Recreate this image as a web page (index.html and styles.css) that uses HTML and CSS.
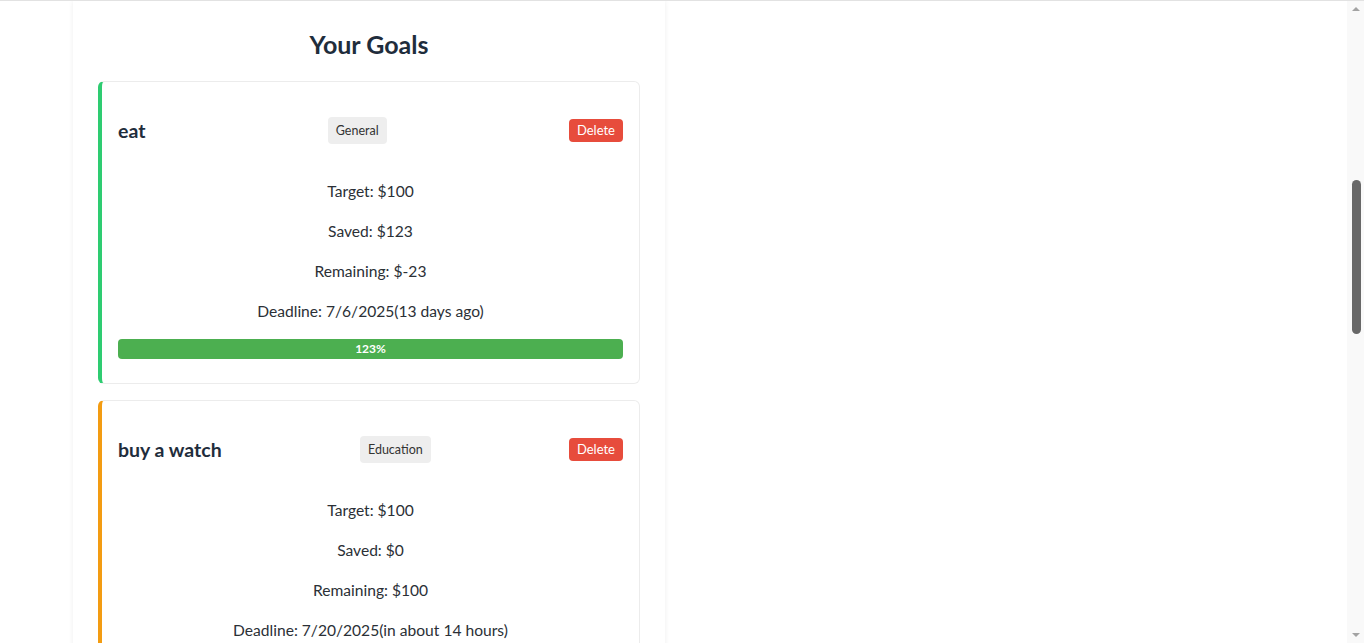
FILE: index.html
```html
<!DOCTYPE html>
<html lang="en">
<head>
<meta charset="utf-8">
<title>Your Goals</title>
<link rel="stylesheet" href="styles.css">
</head>
<body>
<div class="layout">
  <section class="panel">
    <h2 class="panel-title">Your Goals</h2>

    <div class="goal goal-done">
      <div class="goal-head">
        <h3 class="goal-name">eat</h3>
        <span class="badge">General</span>
        <button class="btn-delete">Delete</button>
      </div>
      <p class="goal-line">Target: $100</p>
      <p class="goal-line">Saved: $123</p>
      <p class="goal-line">Remaining: $-23</p>
      <p class="goal-line">Deadline: 7/6/2025(13 days ago)</p>
      <div class="bar">
        <div class="bar-fill" style="width:100%">123%</div>
      </div>
    </div>

    <div class="goal goal-pending">
      <div class="goal-head">
        <h3 class="goal-name">buy a watch</h3>
        <span class="badge">Education</span>
        <button class="btn-delete">Delete</button>
      </div>
      <p class="goal-line">Target: $100</p>
      <p class="goal-line">Saved: $0</p>
      <p class="goal-line">Remaining: $100</p>
      <p class="goal-line">Deadline: 7/20/2025(in about 14 hours)</p>
      <div class="bar">
        <div class="bar-fill" style="width:0%"></div>
        <span class="bar-label">0%</span>
      </div>
    </div>
  </section>
</div>

<div class="scrollbar" aria-hidden="true">
  <span class="scroll-arrow scroll-up"></span>
  <span class="scroll-thumb"></span>
  <span class="scroll-arrow scroll-down"></span>
</div>
</body>
</html>
```

FILE: styles.css
```css
* { box-sizing: border-box; }

html, body {
  margin: 0;
  padding: 0;
  background: #ffffff;
}

body {
  font-family: Lato, "Open Sans", sans-serif;
  color: #2b3036;
  line-height: 1.5;
  font-size: 16px;
  border-top: 1px solid #e2e2e2;
  padding-right: 18px;
}

.layout {
  width: 1200px;
  margin: 0 auto;
  display: grid;
  grid-template-columns: 1fr 1fr;
  column-gap: 16px;
  align-items: start;
}

.panel {
  background: #fff;
  padding: 25px 25px 25px;
  box-shadow: 0 0 5px rgba(0, 0, 0, 0.07);
}

.panel-title {
  margin: 0 0 19px;
  font-size: 25px;
  line-height: 36px;
  font-weight: 700;
  text-align: center;
  color: #1f2d3c;
}

.goal {
  border: 1px solid #ececec;
  border-left: 4px solid #2ecc71;
  border-radius: 6px;
  padding: 16px 16px 24px;
  margin-bottom: 16px;
  text-align: center;
}

.goal-pending { border-left-color: #f39c12; }

.goal-head {
  display: flex;
  justify-content: space-between;
  align-items: center;
  height: 65px;
}

.goal-name {
  margin: 0;
  font-size: 19.5px;
  font-weight: 700;
  color: #1f2d3c;
}

.badge {
  background: #eeeeee;
  color: #333;
  font-size: 12.5px;
  line-height: 19.5px;
  padding: 4px 8px;
  border-radius: 4px;
}

.btn-delete {
  background: #e74c3c;
  color: #fff;
  border: none;
  border-radius: 4px;
  font-family: inherit;
  font-size: 13px;
  line-height: 17px;
  padding: 3px 8px;
  cursor: pointer;
}

.goal-line {
  margin: 16px 0;
  line-height: 24px;
  font-size: 15.6px;
}

.bar {
  position: relative;
  height: 20px;
  background: #eeeeee;
  border-radius: 4px;
  overflow: hidden;
}

.bar-fill {
  height: 100%;
  background: #4caf50;
  color: #fff;
  font-size: 12px;
  font-weight: 700;
  line-height: 20px;
  text-align: center;
}

.bar-label {
  position: absolute;
  inset: 0;
  font-size: 12px;
  font-weight: 700;
  line-height: 20px;
  color: #333;
}

/* classic browser scrollbar, drawn over the right edge */
.scrollbar {
  position: fixed;
  top: 0;
  right: 0;
  width: 17px;
  height: 100vh;
  background: #f9f9f9;
  border-top: 1px solid #e2e2e2;
}

.scroll-thumb {
  position: absolute;
  left: 5px;
  top: 179px;
  width: 9px;
  height: 154px;
  border-radius: 5px;
  background: #686868;
}

.scroll-arrow {
  position: absolute;
  left: 5px;
  width: 0;
  height: 0;
  border-left: 4.5px solid transparent;
  border-right: 4.5px solid transparent;
}

.scroll-up {
  top: 6px;
  border-bottom: 4px solid #a3a3a3;
}

.scroll-down {
  bottom: 6px;
  border-top: 4px solid #a3a3a3;
}
```
